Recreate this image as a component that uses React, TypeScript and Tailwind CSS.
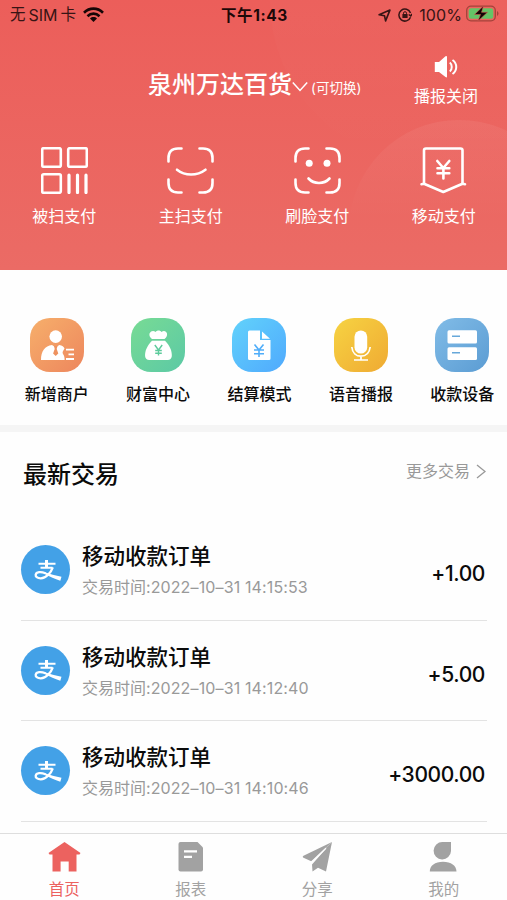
import type { ReactNode } from "react";

type Item = { label: string; icon: ReactNode };

const payActions: Item[] = [
  {
    label: "被扫支付",
    icon: (
      <>
        <rect x="1.2" y="1.2" width="18.6" height="18.6" rx="1.5" />
        <rect x="27.2" y="1.2" width="18.6" height="18.6" rx="1.5" />
        <rect x="1.2" y="27.2" width="18.6" height="18.6" rx="1.5" />
        <path d="M28 28.2v17.4M36.5 28.2v17.4M45 28.2v17.4" strokeWidth="3.2" />
      </>
    ),
  },
  {
    label: "主扫支付",
    icon: (
      <>
        <ScanCorners />
        <path d="M10 22.7c8 6.4 20 6.4 28.5 0" />
      </>
    ),
  },
  {
    label: "刷脸支付",
    icon: (
      <>
        <ScanCorners />
        <circle cx="15.2" cy="16.3" r="3.5" fill="currentColor" stroke="none" />
        <circle cx="33" cy="16.3" r="3.5" fill="currentColor" stroke="none" />
        <path d="M14.5 31.5c5.5 6 15.5 6 21 0" />
      </>
    ),
  },
  {
    label: "移动支付",
    icon: (
      <>
        <path d="M4 36V3.5Q4 1.5 6 1.5H40.5Q42.500 1.5 42.5 3.5V36" />
        <path d="M1.5 37.2L4 36.8L23.3 45L42.5 36.8L45 37.2" />
        <path d="M17.3 14l6 7l6-7M17.5 21.3h11.8M17.5 26.3h11.8M23.4 21.5v10" />
      </>
    ),
  },
];

const services: (Item & { tone: string })[] = [
  {
    label: "新增商户",
    tone: "from-[#f6af6b] to-[#ed865d]",
    icon: (
      <>
        <circle cx="25.7" cy="18.6" r="6.3" fill="#fff" />
        <path d="M11 42C11 33 15 28 22 27l3.7 2.5L29.3 27c3 .5 4.5 1.8 5.2 3.500c-1.5 2.5-2.5 3.500-1.5 5.500c1.5 2 1.600 4 1.600 6z" fill="#fff" />
        <path d="M24 28h3.5l-.8 3l1.6 4.500l-2.600 2.500l-2.600-2.500l1.600-4.500z" fill="#ee925f" />
        <path d="M36 31.7h8M38.500 36.300h5.500M36 41h8" stroke="#fff" strokeWidth="1.8" />
      </>
    ),
  },
  {
    label: "财富中心",
    tone: "from-[#78db94] to-[#5bc9a5]",
    icon: (
      <>
        <path d="M18.5 15.5c1.5-3.2 4.500-3 6-1.5c1.700-2 4.500-2 6 0c2-1.800 4.800-1.200 5.500 1.500c.5 2-1 4.600-2.500 5.500H21c-2-1.400-3-3.500-2.500-5.500zM21 22.800h13c4.500 4.500 7.300 10 6.800 15.500c-.3 2.300-1.800 3.700-4 3.700H18.200c-2.200 0-3.900-1.400-4.100-3.700c-.4-5.500 2.400-11 6.900-15.500z" fill="#fff" />
        <path d="M23.800 27l3.700 5l3.700-5M24.200 32.500h6.600M24.200 35.300h6.600M27.500 32v5.500" stroke="#5dcb9c" strokeWidth="1.4" />
      </>
    ),
  },
  {
    label: "结算模式",
    tone: "from-[#62d2fb] to-[#50a9fd]",
    icon: (
      <>
        <path d="M16 14q0-1.500 1.500-1.500H28V22h10.500v18.500q0 1.500-1.500 1.500H17.500Q16 42 16 40.500zM30 13.500l8 7.200H30z" fill="#fff" />
        <path d="M22.500 26.500l4.500 5.500l4.500-5.500M22 32h10M22 35.700h10M27 32v7" stroke="#50aefa" strokeWidth="1.6" />
      </>
    ),
  },
  {
    label: "语音播报",
    tone: "from-[#f6d342] to-[#efaa33]",
    icon: (
      <>
        <rect x="20.500" y="12.500" width="12.700" height="23" rx="6.350" fill="#fff" />
        <path d="M17.800 29c.6 6 4.400 9.200 9.100 9.200S35.400 35 36.200 29M27 38v3.500M20 42h14" stroke="#fff" strokeWidth="1.7" />
      </>
    ),
  },
  {
    label: "收款设备",
    tone: "from-[#81bce7] to-[#5b9cd3]",
    icon: (
      <>
        <rect x="12.500" y="12.300" width="29.500" height="13.200" rx="1.5" fill="#fff" />
        <rect x="12.500" y="29.300" width="29.500" height="12.700" rx="1.5" fill="#fff" />
        <path d="M17 18.200h8M17 34.700h8" stroke="#67a8da" strokeWidth="1.6" />
      </>
    ),
  },
];

const orders = [
  { time: "2022–10–31 14:15:53", amount: "+1.00" },
  { time: "2022–10–31 14:12:40", amount: "+5.00" },
  { time: "2022–10–31 14:10:46", amount: "+3000.00" },
];

const tabs: Item[] = [
  {
    label: "首页",
    icon: <path d="M16.500 1L32.500 12L31.500 13.500H28.500V30.500H20.700V20.500H12.600V30.500H4.500V13.500H1.500L.5 12z" />,
  },
  {
    label: "报表",
    icon: (
      <>
        <path d="M6.500 1H23.500L29 6.500V28.500Q29 30.500 27 30.500H6.500Q4.500 30.500 4.500 28.500V3Q4.500 1 6.500 1z" />
        <path d="M10 10.300H23M10 15.800H18" stroke="#fff" strokeWidth="2.200" />
      </>
    ),
  },
  {
    label: "分享",
    icon: (
      <>
        <path d="M31 1L10.200 20.300L2 16.500Q1.300 15.500 2.500 14.800z" />
        <path d="M31 1L25 30.500L17 26.800L11.500 30.500L11 23.500L24.500 8.200L10.600 20.700z" />
        <path d="M10.300 21.500L25 7.200" stroke="#fefefe" strokeWidth="1.2" />
      </>
    ),
  },
  {
    label: "我的",
    icon: (
      <path d="M15.500 1H24V10A8.700 8.700 0 1 1 15.500 1zM2.800 30.500C2.800 24.500 8 20.700 16 20.700S29.500 24.500 29.500 30.500z" />
    ),
  },
];

function ScanCorners() {
  return (
    <path d="M1.5 14.500V11Q1.500 1.500 11 1.500H14.500M32.500 1.500H36Q45.500 1.500 45.500 11V14.500M45.500 32.500V36Q45.500 45.500 36 45.500H32.500M14.500 45.500H11Q1.500 45.500 1.500 36V32.500" />
  );
}

function StatusBar() {
  return (
    <div className="grid h-[30px] grid-cols-3 items-center pl-[10px] pr-[8px] text-[16px] leading-none text-[#371414]">
      <div className="flex items-center gap-[7px]">
        <span className="flex items-center gap-[3px] whitespace-nowrap text-[15.5px]">
          <span>无</span>
          <span className="text-[16px]">SIM</span>
          <span>卡</span>
        </span>
        <svg width="21" height="16" viewBox="0 0 21 16" fill="none" stroke="#160606" strokeWidth="2.6">
          <path d="M1 5.700C6.500.3 14.500.3 20 5.700M4.500 9.200c3.500-3.400 8.500-3.400 12 0" />
          <path d="M10.500 15L7 11.500c2-1.900 5-1.900 7 0z" fill="#160606" stroke="none" />
        </svg>
      </div>
      <div className="pt-[1px] text-center text-[15.5px] font-bold tracking-[0.6px] text-[#1d0808]">下午1:43</div>
      <div className="flex items-center justify-end">
        <svg width="13" height="13" viewBox="0 0 12 12" fill="none" stroke="currentColor" strokeWidth="1.5" strokeLinejoin="round">
          <path d="M11 1L7 11L6 6.200L1 5.300z" />
        </svg>
        <svg className="ml-[7px] mr-[7px]" width="14" height="14" viewBox="0 0 14 14" fill="none" stroke="currentColor" strokeWidth="1.5">
          <path d="M12.500 5A6 6 0 1 0 12.500 9.200M10.700 6.500L12.700 8L14 6" />
          <path d="M5.500 6.500V5.200a1.500 1.500 0 0 1 3 0v1.300" strokeWidth="1" />
          <rect x="4.400" y="6" width="5.200" height="4" fill="currentColor" stroke="none" />
        </svg>
        <span className="text-[16px] tracking-[0.1px]">100%</span>
        <svg className="-mt-[3px] ml-[4px]" width="33" height="17" viewBox="0 0 33 17">
          <rect x=".7" y="1.200" width="28.600" height="14.600" rx="4.300" fill="none" stroke="#a3433a" strokeWidth="1.300" />
          <rect x="2.700" y="3.200" width="24.600" height="10.600" rx="2.500" fill="#64c466" />
          <path d="M31 6v5q1.500-.8 1.500-2.500T31 6z" fill="#a3433a" />
          <path d="M17.500 1L8.500 9.500h6L12 16l9.500-8.700h-6z" fill="#120505" stroke="#d4574f" strokeWidth=".6" />
        </svg>
      </div>
    </div>
  );
}

function Header() {
  return (
    <header className="relative h-[270px] shrink-0 overflow-hidden bg-gradient-to-b from-[#ec5e5a] to-[#eb6b65] text-white">
      {/* Soft background circles */}
      <div className="absolute -top-[165px] left-[270px] size-[330px] rounded-full bg-gradient-to-b from-white/4 to-transparent" />
      <div className="absolute left-[349px] top-[120px] size-[220px] rounded-full bg-gradient-to-b from-white/6 to-transparent to-45%" />

      <div className="relative">
        <StatusBar />

        <div className="flex h-[117px] justify-end pr-[29px]">
          <div className="flex items-center self-start pt-[38px]">
            <h1 className="text-[24px] font-medium leading-[34px]">泉州万达百货</h1>
            <svg className="mt-[2px]" width="16" height="11" viewBox="0 0 16 11" fill="none" stroke="currentColor" strokeWidth="1.5">
              <path d="M.8 1.500L8 9.500L15.200 1.500" />
            </svg>
            <span className="ml-[3px] mt-[6px] w-[52px] whitespace-nowrap text-[13.5px] leading-5">(可切换)</span>
          </div>
          <div className="ml-[51px] flex flex-col items-center pt-[25px]">
            <svg width="24" height="24" viewBox="0 0 24 24" fill="none" stroke="currentColor">
              <path d="M.8 7H5L11.500 1.200Q13 .5 13 2V21.500Q13 23 11.500 22L5 17H.8z" fill="currentColor" stroke="none" />
              <path d="M15.800 7.500c2.600 2 2.600 7 0 9M18.500 5c5 3.500 5 10.500 0 14" strokeWidth="2" />
            </svg>
            <span className="mt-[6px] text-[16px] leading-[22px]">播报关闭</span>
          </div>
        </div>

        <nav className="grid grid-cols-4 pl-[1px]">
          {payActions.map((action) => (
            <button key={action.label} className="flex flex-col items-center">
              <svg width="47" height="47" viewBox="0 0 47 47" fill="none" stroke="currentColor" strokeWidth="2.6" strokeLinecap="round" strokeLinejoin="round">
                {action.icon}
              </svg>
              <span className="mt-[11px] text-[16px] leading-[22px]">{action.label}</span>
            </button>
          ))}
        </nav>
      </div>
    </header>
  );
}

function AlipayMark() {
  return (
    <div className="flex size-[49px] shrink-0 items-center justify-center rounded-full bg-[#43a1e7]">
      <svg className="ml-[4px]" width="28" height="24" viewBox="0 0 28 24" fill="none" stroke="#fff">
        <path d="M4.500 5.800H21.500M6.500 9.800H18.500" strokeWidth="2" />
        <path d="M12.500 2V10" strokeWidth="3" />
        <path d="M18.800 9.300C17 14.500 12 20.300 6.800 20.300C3 20.300 1.500 18.500 1.700 16.800C2.200 13.700 7 13.500 11.500 15.300" strokeWidth="2.300" />
        <path d="M10.500 13.900C16 16 21.500 17.500 27.500 18.700L26.300 22.700C20.500 21 16.500 18.800 10.500 16z" fill="#fff" stroke="none" />
      </svg>
    </div>
  );
}

export default function App() {
  return (
    <div className="flex h-[900px] w-[507px] flex-col overflow-hidden bg-[#fefefe] font-['Inter','Noto_Sans_CJK_SC',sans-serif] text-[#0b0b0b]">
      <Header />

      <section className="h-[162px] shrink-0 overflow-hidden border-b-[7px] border-[#f5f5f5]">
        <div className="-mr-[6px] ml-[6px] grid grid-cols-5 pt-[48px]">
          {services.map((service) => (
            <button key={service.label} className="flex flex-col items-center">
              <span className={`size-[54px] rounded-[20px] bg-gradient-to-br ${service.tone}`}>
                <svg width="54" height="54" viewBox="0 0 54 54" fill="none">
                  {service.icon}
                </svg>
              </span>
              <span className="mt-[11px] whitespace-nowrap text-[16px] font-medium leading-[22px]">{service.label}</span>
            </button>
          ))}
        </div>
      </section>

      <main className="h-[401px] shrink-0 overflow-hidden px-[21px]">
        <div className="flex h-[88px] justify-between pl-[2px] pt-[26px]">
          <h2 className="text-[24px] font-medium leading-[34px]">最新交易</h2>
          <a className="-mt-px flex h-7 items-center text-[16px] text-[#999]">
            更多交易
            <svg className="ml-[6px]" width="10" height="15" viewBox="0 0 10 15" fill="none" stroke="currentColor" strokeWidth="1.3">
              <path d="M1 1L9 7.500L1 14" />
            </svg>
          </a>
        </div>

        <ul className="-mr-[1px]">
          {orders.map((order) => (
            <li key={order.time} className="flex h-[100.5px] items-start border-b-[1.5px] border-[#e3e3e3] pt-[25px]">
              <AlipayMark />
              <div className="-mt-[4px] ml-[12px] flex-1">
                <p className="text-[21.5px] font-medium leading-[30px]">移动收款订单</p>
                <p className="mt-[5px] whitespace-nowrap text-[16px] leading-[22px] text-[#999]">
                  交易时间:<span className="tracking-[0.13px]">{order.time}</span>
                </p>
              </div>
              <span className="mr-[2px] mt-[14px] text-[21px] font-medium leading-[30px] tracking-[-0.4px]">{order.amount}</span>
            </li>
          ))}
        </ul>
      </main>

      <footer className="grid min-h-0 flex-1 grid-cols-4 border-t-[1.5px] border-[#dedede] pl-[1px]">
        {tabs.map((tab, i) => (
          <button key={tab.label} className={`flex h-[66px] flex-col items-center pt-[7px] ${i === 0 ? "text-[#ec625f]" : "text-[#a2a2a2]"}`}>
            <svg className="shrink-0" width="33" height="32" viewBox="0 0 33 32" fill="currentColor">
              {tab.icon}
            </svg>
            <span className="mt-[6px] text-[15.5px] leading-[22px]">{tab.label}</span>
          </button>
        ))}
      </footer>
    </div>
  );
}
